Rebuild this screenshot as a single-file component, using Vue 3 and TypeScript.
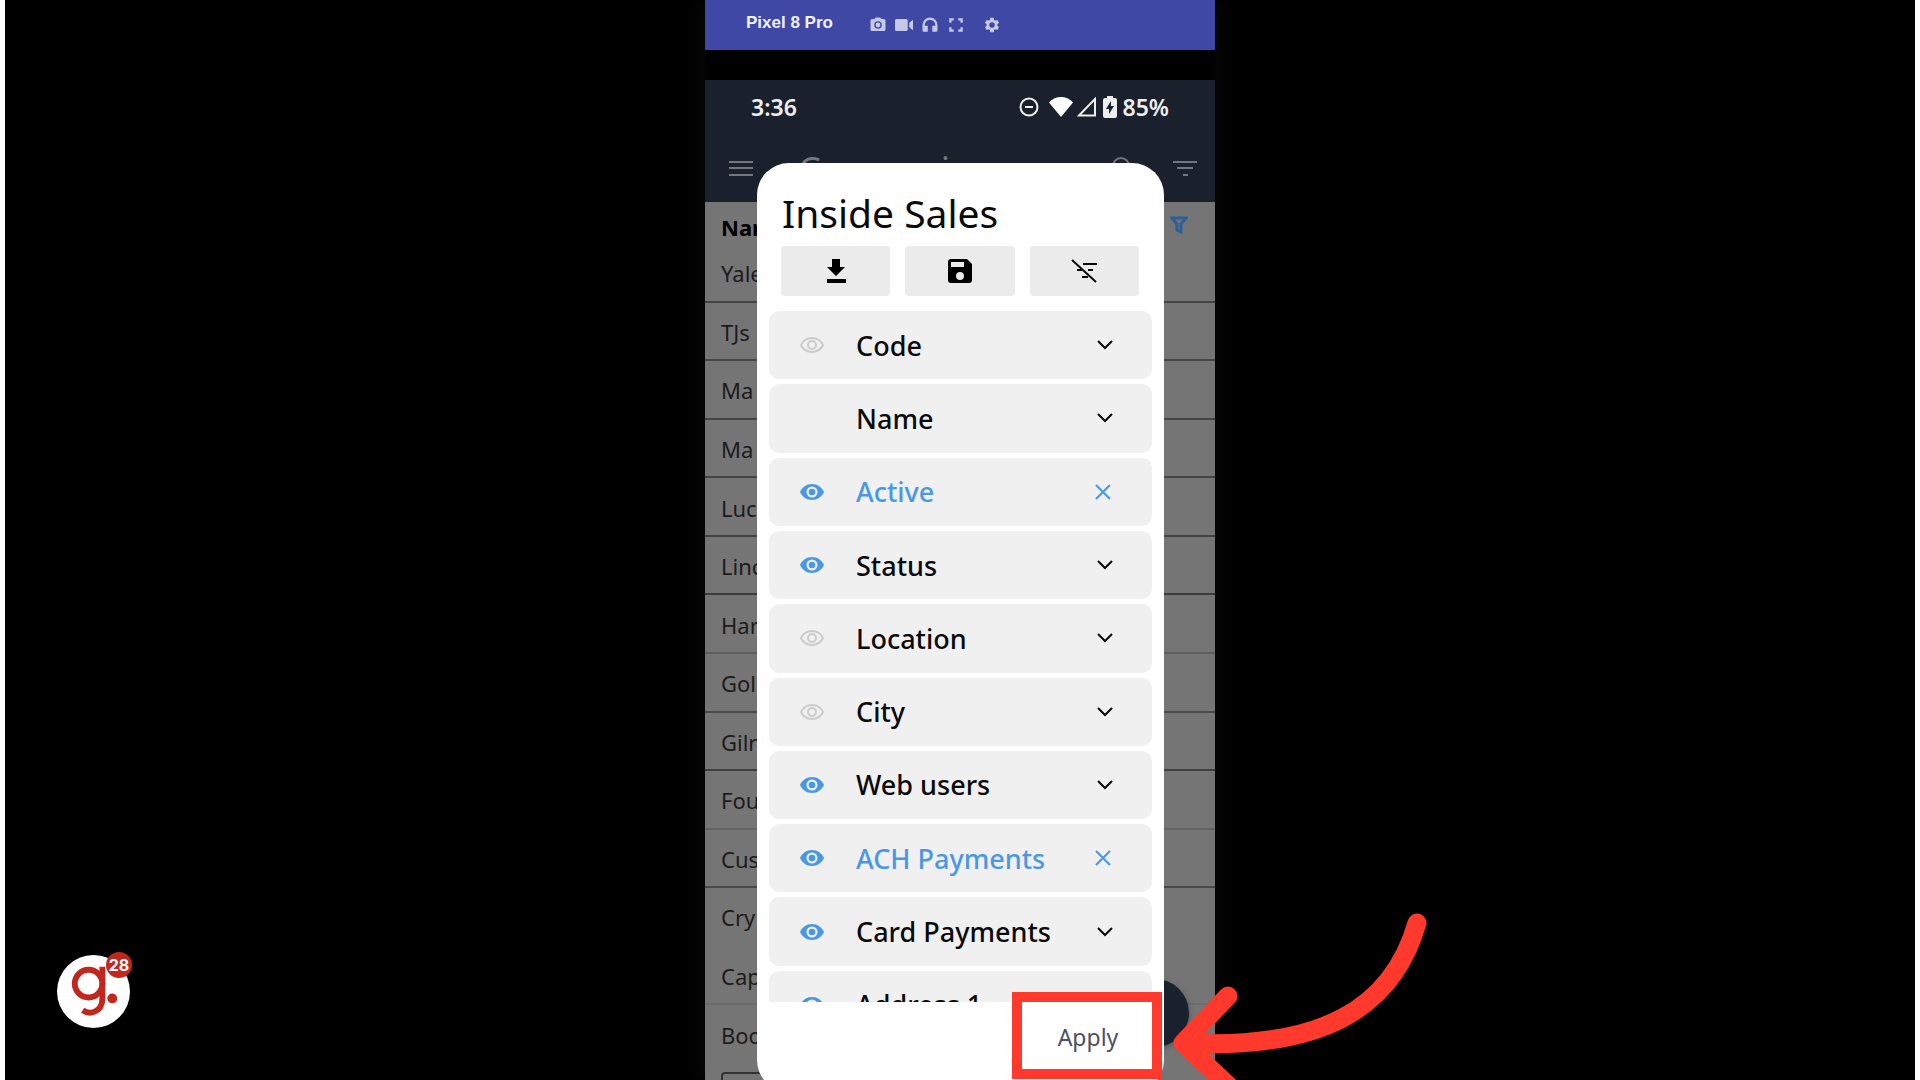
<script setup lang="ts">
interface Account {
  name: string
  line: string
}

interface Column {
  label: string
  eye: 'on' | 'off' | 'none'
  filtered?: boolean
}

const accounts: Account[] = [
  { name: 'Yale', line: '#444' },
  { name: 'TJs', line: '#484848' },
  { name: 'Ma', line: '#444' },
  { name: 'Ma', line: '#444' },
  { name: 'Luc', line: '#444' },
  { name: 'Linc', line: '#3c3c3c' },
  { name: 'Har', line: '#5f5f5f' },
  { name: 'Gol', line: '#4c4c4c' },
  { name: 'Gilr', line: '#3f3f3f' },
  { name: 'Fou', line: '#646464' },
  { name: 'Cus', line: '#4a4a4a' },
  { name: 'Cry', line: '#757575' },
  { name: 'Cap', line: '#6c6c6c' },
  { name: 'Boo', line: '#757575' },
]

const columns: Column[] = [
  { label: 'Code', eye: 'off' },
  { label: 'Name', eye: 'none' },
  { label: 'Active', eye: 'on', filtered: true },
  { label: 'Status', eye: 'on' },
  { label: 'Location', eye: 'off' },
  { label: 'City', eye: 'off' },
  { label: 'Web users', eye: 'on' },
  { label: 'ACH Payments', eye: 'on', filtered: true },
  { label: 'Card Payments', eye: 'on' },
  { label: 'Address 1', eye: 'on' },
]
</script>

<template>
  <main class="stage">
    <section class="phone">
      <header class="device-bar">
        <h1 class="device-name">Pixel 8 Pro</h1>
        <nav class="device-tools">
          <button type="button" aria-label="Take photo">
            <svg viewBox="0 0 24 24"><path d="M12 15.2a3.2 3.2 0 1 0 0-6.4 3.2 3.2 0 0 0 0 6.4zM9 2 7.2 4H4a2 2 0 0 0-2 2v12a2 2 0 0 0 2 2h16a2 2 0 0 0 2-2V6a2 2 0 0 0-2-2h-3.200L15 2H9zm3 15a5 5 0 1 1 0-10 5 5 0 0 1 0 10z" /></svg>
          </button>
          <button type="button" aria-label="Record video">
            <svg viewBox="0 0 24 24"><path d="M2 4h13a2 2 0 0 1 2 2v12a2 2 0 0 1-2 2H2a2 2 0 0 1-2-2V6a2 2 0 0 1 2-2zM24 5v14l-5-4V9z" /></svg>
          </button>
          <button type="button" aria-label="Audio">
            <svg viewBox="0 0 24 24"><path d="M12 2a10 10 0 0 0-10 10v7a2 2 0 0 0 2 2h5v-8H5v-1a7 7 0 0 1 14 0v1h-4v8h5a2 2 0 0 0 2-2v-7A10 10 0 0 0 12 2z" /></svg>
          </button>
          <button type="button" aria-label="Full screen">
            <svg viewBox="0 0 24 24"><path d="M3 3h6v3H6v3H3zM15 3h6v6h-3V6h-3zM3 15h3v3h3v3H3zM18 15h3v6h-6v-3h3z" /></svg>
          </button>
          <button type="button" class="gear" aria-label="Settings">
            <svg viewBox="0 0 24 24"><path d="M19.140 12.940c.04-.3.060-.61.060-.94s-.02-.64-.07-.94l2.030-1.580c.18-.14.23-.41.120-.61l-1.920-3.320c-.12-.22-.37-.29-.59-.22l-2.390.96c-.5-.38-1.030-.7-1.620-.94l-.36-2.540A.48.48 0 0 0 13.920 2.400h-3.840c-.24 0-.43.17-.47.41l-.36 2.540c-.59.24-1.130.57-1.620.94l-2.390-.96c-.22-.08-.47 0-.59.22L2.740 8.870c-.12.21-.08.47.12.61l2.030 1.580c-.05.3-.09.63-.09.94s.02.64.07.94l-2.030 1.580c-.18.14-.23.41-.12.61l1.920 3.320c.12.22.37.29.59.22l2.390-.96c.5.38 1.030.7 1.620.94l.36 2.540c.05.24.24.41.48.41h3.840c.24 0 .44-.17.47-.41l.36-2.540c.59-.24 1.130-.56 1.620-.94l2.390.96c.22.08.47 0 .59-.22l1.920-3.320c.12-.22.07-.47-.12-.61zM12 15.600a3.600 3.600 0 1 1 0-7.200 3.600 3.600 0 0 1 0 7.200z" /></svg>
          </button>
        </nav>
      </header>

      <div class="screen">
        <div class="status-bar">
          <time class="clock">3:36</time>
          <div class="status-icons">
            <svg class="dnd" viewBox="0 0 20 20"><circle cx="10" cy="10" r="8.500" /><path d="M6 10h8" /></svg>
            <svg class="wifi" viewBox="0 0 24 20"><path d="M12 20 0 5.500C3 2 7 0 12 0s9 2 12 5.500z" /></svg>
            <svg class="signal" viewBox="0 0 20 20"><path d="M2 18.500 18 2v16.500z" /></svg>
            <svg class="battery" viewBox="0 0 14 22"><path class="cell" d="M4 0h6v2h2a2 2 0 0 1 2 2v16a2 2 0 0 1-2 2H2a2 2 0 0 1-2-2V4a2 2 0 0 1 2-2h2z" /><path class="bolt" d="M8 5 3 13h3v5l5-8H8z" /></svg>
            <span>85%</span>
          </div>
        </div>

        <div class="app-bar">
          <button type="button" class="menu" aria-label="Menu">
            <svg viewBox="0 0 24 16"><path d="M0 2h24M0 8h24M0 15h24" /></svg>
          </button>
          <h2>Companies</h2>
          <button type="button" class="search" aria-label="Search">
            <svg viewBox="0 0 24 24"><circle cx="12" cy="10" r="8" /><path d="m17 16 6 6" /></svg>
          </button>
          <button type="button" aria-label="Filter">
            <svg viewBox="0 0 24 16"><path d="M0 2h24M4 8h16M10 15h5" /></svg>
          </button>
        </div>

        <table class="accounts">
          <thead>
            <tr>
              <th scope="col">
                <div class="head-cell">
                  Name
                  <svg viewBox="0 0 18 18"><path d="M2 2h14l-5 6v8l-4-2V8z" /></svg>
                </div>
              </th>
            </tr>
          </thead>
          <tbody>
            <tr v-for="(account, i) in accounts" :key="i">
              <td :style="{ borderColor: account.line }">{{ account.name }}</td>
            </tr>
          </tbody>
        </table>
        <div class="pager"></div>
        <button type="button" class="fab" aria-label="Add"></button>
      </div>

      <div class="dialog" role="dialog" aria-labelledby="dialog-title">
        <h2 id="dialog-title">Inside Sales</h2>
        <div class="actions">
          <button type="button" aria-label="Load view">
            <svg viewBox="0 0 24 24"><path d="M8 0h8v8h5l-9 9-9-9h5zM3 20h19v4H3z" /></svg>
          </button>
          <button type="button" aria-label="Save view">
            <svg viewBox="0 0 24 24"><path fill-rule="evenodd" d="M3 0h16l5 5v16a3 3 0 0 1-3 3H3a3 3 0 0 1-3-3V3a3 3 0 0 1 3-3zM3 3v5h13V3zM12 13a4 4 0 1 0 0 8 4 4 0 0 0 0-8z" /></svg>
          </button>
          <button type="button" aria-label="Clear filters">
            <svg class="clear" viewBox="0 0 26 24"><path d="M1 1l24 22M12 5h14M6 11h6M17 11h5M11 18h6" /></svg>
          </button>
        </div>

        <div class="viewport">
          <ul class="columns">
            <li v-for="column in columns" :key="column.label" :class="{ filtered: column.filtered }">
              <button v-if="column.eye !== 'none'" type="button" class="eye" :class="column.eye" :aria-label="'Toggle ' + column.label">
                <svg v-if="column.eye === 'on'" viewBox="0 0 24 16"><path fill-rule="evenodd" d="M12 0C6.500 0 2 3.300 0 8c2 4.700 6.500 8 12 8s10-3.300 12-8c-2-4.700-6.500-8-12-8zm0 13.500a5.500 5.500 0 1 1 0-11 5.500 5.500 0 0 1 0 11z" /><circle cx="12" cy="8" r="3.300" /></svg>
                <svg v-else viewBox="0 0 24 16"><path class="line" d="M12 1C7 1 3 3.800 1 8c2 4.200 6 7 11 7s9-2.800 11-7c-2-4.200-6-7-11-7z" /><circle class="line" cx="12" cy="8" r="4" /></svg>
              </button>
              <span v-else class="eye"></span>
              <span class="label">{{ column.label }}</span>
              <button type="button" class="toggle" :aria-label="(column.filtered ? 'Clear ' : 'Expand ') + column.label">
                <svg v-if="column.filtered" class="cross" viewBox="0 0 16 16"><path d="m1 1 14 14M15 1 1 15" /></svg>
                <svg v-else class="chevron" viewBox="0 0 16 10"><path d="m1 1 7 7 7-7" /></svg>
              </button>
            </li>
          </ul>
        </div>

        <footer>
          <button type="button" class="apply">Apply</button>
        </footer>
      </div>

      <svg class="arrow" viewBox="0 0 260 180" aria-hidden="true">
        <path d="M247 23C222 110 150 150 13 143M58 96 13 143l52 49" />
      </svg>
    </section>

    <button type="button" class="guide" aria-label="Guide steps">
      <svg viewBox="0 0 74 74"><circle class="ring" cx="32" cy="29" r="14" /><path class="ring" d="M46 12v32c0 12-11 18-20 12" /><circle class="dot" cx="56" cy="44" r="5" /></svg>
      <span class="count">28</span>
    </button>
  </main>
</template>

<style>
body {
  margin: 0;
  background: #000;
}
</style>

<style scoped>
* {
  box-sizing: border-box;
}

button {
  padding: 0;
  border: 0;
  background: none;
  font: inherit;
  color: inherit;
}

h1,
h2,
ul {
  margin: 0;
  padding: 0;
}

svg {
  display: block;
}

.stage {
  position: relative;
  display: flex;
  justify-content: center;
  height: 100vh;
  overflow: hidden;
  border: solid #fff;
  border-width: 0 5px;
  background: #000;
  font-family: "Noto Sans", "Open Sans", sans-serif;
}

.phone {
  position: relative;
  display: flex;
  flex-direction: column;
  gap: 30px;
  width: 510px;
  box-shadow: 0 0 24px #0c0c0c;
}

.device-bar {
  display: flex;
  flex: none;
  align-items: center;
  height: 50px;
  padding-left: 41px;
  background: #3f49a5;
  color: #f0f1fa;
}

.device-name {
  width: 123px;
  padding-bottom: 4px;
  font: 700 17px/20px "Liberation Sans", sans-serif;
}

.device-tools {
  display: flex;
  gap: 8px;
  color: #c5c9e6;
}

.device-tools svg {
  width: 18px;
  height: 18px;
  fill: currentColor;
}

.device-tools .gear {
  margin-left: 10px;
}

.screen {
  position: relative;
  flex: 1;
  min-height: 0;
  overflow: hidden;
  background: #757575;
}

.status-bar,
.app-bar {
  display: flex;
  align-items: center;
  background: #1b202d;
}

.status-bar {
  justify-content: space-between;
  height: 56px;
  padding: 0 46px 2px;
  color: #eee;
  font: 600 23px/30px "Noto Sans", sans-serif;
}

.status-icons {
  display: flex;
  align-items: center;
  gap: 6px;
}

.status-icons svg {
  fill: none;
  stroke: #eee;
  stroke-width: 2;
}

.status-icons .dnd {
  width: 20px;
  height: 20px;
  margin-right: 4px;
}

.status-icons .wifi {
  width: 24px;
  height: 20px;
  margin-right: -2px;
  fill: #fff;
  stroke: none;
}

.status-icons .signal {
  width: 20px;
  height: 20px;
}

.status-icons .battery {
  width: 14px;
  height: 22px;
  stroke: none;
}

.battery .cell {
  fill: #eee;
}

.battery .bolt {
  fill: #1b202d;
}

.app-bar {
  height: 66px;
  padding: 0 18px 2px 24px;
  color: #73767e;
}

.app-bar svg {
  width: 24px;
  height: 16px;
  fill: none;
  stroke: currentColor;
  stroke-width: 2;
}

.app-bar h2 {
  flex: 1;
  padding: 4px 0 0 45px;
  font-size: 36px;
  font-weight: 400;
  line-height: 50px;
}

.app-bar .search {
  margin-right: 40px;
}

.app-bar .search svg {
  height: 24px;
}

.accounts {
  width: 100%;
  height: 862px;
  border-collapse: separate;
  border-spacing: 0;
  color: #1c1c1c;
  font-size: 22px;
  line-height: 30px;
  text-align: left;
}

.accounts th {
  height: 42px;
  padding: 0;
  color: #000;
}

.head-cell {
  display: flex;
  align-items: center;
  justify-content: space-between;
  padding: 9px 27px 1px 16px;
}

.head-cell svg {
  width: 18px;
  height: 18px;
  margin-top: -4px;
  fill: none;
  stroke: #2c5f98;
  stroke-width: 3;
}

.accounts td {
  padding: 2px 16px 0;
  border-bottom: 2px solid;
}

.pager {
  width: 100px;
  height: 40px;
  margin: 8px 0 0 16px;
  border: 2px solid #333;
  border-radius: 4px;
}

.fab {
  position: absolute;
  top: 899px;
  right: 26px;
  width: 68px;
  height: 68px;
  border-radius: 50%;
  background: #1b202d;
  box-shadow: 0 2px 6px #555;
}

.dialog {
  position: absolute;
  top: 163px;
  left: 52px;
  right: 51px;
  display: flex;
  flex-direction: column;
  height: 929px;
  border-radius: 32px;
  background: #fff;
  color: #0a0a0a;
}

.dialog h2 {
  padding: 22px 25px 0;
  font-size: 39px;
  font-weight: 400;
  line-height: 56px;
}

.actions {
  display: flex;
  gap: 15px;
  padding: 5px 25px 14px 24px;
}

.actions button {
  display: flex;
  flex: 1;
  align-items: center;
  justify-content: center;
  height: 50px;
  border-radius: 4px;
  background: #ebebeb;
}

.actions svg {
  width: 24px;
  height: 24px;
}

.actions .clear {
  width: 26px;
  fill: none;
  stroke: #0a0a0a;
  stroke-width: 2;
}

.viewport {
  height: 692px;
  overflow: hidden;
}

.columns {
  display: grid;
  grid-template-rows: repeat(10, 1fr);
  gap: 5px;
  height: 729px;
  padding: 1px 12px 0;
  list-style: none;
}

.columns li {
  display: flex;
  align-items: center;
  padding: 0 39px 0 31px;
  border-radius: 10px;
  background: #f0f0f0;
}

.eye {
  width: 24px;
  margin-right: 32px;
}

.eye svg {
  width: 24px;
  height: 16px;
  fill: #4a98e3;
}

.eye .line {
  fill: none;
  stroke: #cbcbcb;
  stroke-width: 2;
}

.label {
  flex: 1;
  padding-top: 1px;
  font-size: 27px;
  font-weight: 500;
  line-height: 36px;
}

.toggle svg {
  fill: none;
  stroke: currentColor;
}

.chevron {
  width: 16px;
  height: 10px;
  stroke-width: 2;
}

.cross {
  width: 16px;
  height: 16px;
  margin-right: 2px;
  stroke-width: 2;
}

.filtered {
  color: #4a98e3;
}

footer {
  display: flex;
  flex: 1;
  justify-content: flex-end;
}

.apply {
  position: relative;
  width: 150px;
  height: 87px;
  margin: -10px 2px 0 0;
  border: 10px solid #ff3a2d;
  padding: 2px 0 0 2px;
  background: #fff;
  color: #4b5068;
  font-size: 23px;
  line-height: 32px;
}

.arrow {
  position: absolute;
  top: 900px;
  left: 465px;
  width: 260px;
  height: 180px;
  fill: none;
  stroke: #ff3a2d;
  stroke-width: 19;
  stroke-linecap: round;
  stroke-linejoin: round;
}

.guide {
  position: absolute;
  bottom: 52px;
  left: 52px;
  width: 73px;
  height: 73px;
  border-radius: 50%;
  background: #fff;
}

.ring {
  fill: none;
  stroke: #c1281d;
  stroke-width: 6;
}

.dot {
  fill: #c1281d;
}

.count {
  position: absolute;
  top: -3px;
  right: -2px;
  width: 26px;
  height: 26px;
  border-radius: 50%;
  background: #c1281d;
  color: #fff;
  font: 700 16px/26px Inter, sans-serif;
}
</style>
